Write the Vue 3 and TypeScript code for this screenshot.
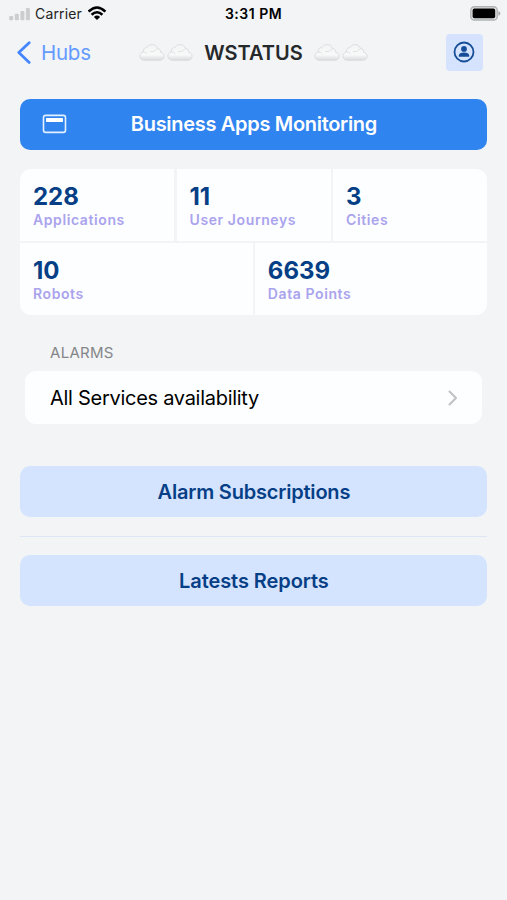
<script setup lang="ts">
interface Stat {
  value: number
  label: string
}

const totals: Stat[] = [
  { value: 228, label: 'Applications' },
  { value: 11, label: 'User Journeys' },
  { value: 3, label: 'Cities' },
]

const resources: Stat[] = [
  { value: 10, label: 'Robots' },
  { value: 6639, label: 'Data Points' },
]

const statRows: Stat[][] = [totals, resources]
const cloudGroups: string[] = ['before', 'after']
</script>

<template>
  <div class="screen">
    <svg class="defs" width="0" height="0" aria-hidden="true">
      <defs>
        <linearGradient id="cloudFill" x1="0" y1="0" x2="0" y2="1">
          <stop offset="0" stop-color="#f3f4f4" />
          <stop offset="0.65" stop-color="#f9f9fa" />
          <stop offset="1" stop-color="#d9dbde" />
        </linearGradient>
      </defs>
    </svg>

    <div class="status">
      <div class="carrier">
        <svg width="22" height="14" viewBox="0 0 22 14" fill="#cbcdce">
          <rect x="0.2" y="9" width="4" height="4.2" rx="1" />
          <rect x="5.8" y="6.8" width="4" height="6.4" rx="1" />
          <rect x="11.4" y="4" width="4" height="9.2" rx="1" />
          <rect x="16.9" y="1" width="4" height="12.2" rx="1" />
        </svg>
        <span class="carrier-name">Carrier</span>
        <svg width="20" height="15" viewBox="0 0 20 15" fill="none" stroke="#000" stroke-width="2.6">
          <path d="M0.6 5.6Q9-2.6 17.4 5.6" />
          <path d="M3.6 8.8Q9 3.7 14.4 8.8" />
          <path d="M9 14L5.9 10.9Q9 8.2 12.1 10.9Z" fill="#000" stroke="none" />
        </svg>
      </div>
      <span class="time">3:31 PM</span>
      <svg class="battery" width="31" height="15" viewBox="0 0 31 15">
        <rect x="0.8" y="0.8" width="26.4" height="13.2" rx="3.6" fill="#e2e4e6" stroke="#b0b2b4" stroke-width="1.4" />
        <rect x="2.6" y="2.6" width="22.6" height="9.6" rx="1.8" fill="#000" />
        <path d="M28.4 5Q30.4 5.7 30.4 7.4T28.4 9.8Z" fill="#a9abad" />
      </svg>
    </div>

    <nav class="nav">
      <a class="back">
        <svg width="15" height="24" viewBox="0 0 15 24" fill="none" stroke="#4586ff" stroke-width="2.8" stroke-linecap="round" stroke-linejoin="round">
          <path d="M13.2 1.8L2.8 11.6L13.2 21.4" />
        </svg>
        <span class="back-label">Hubs</span>
      </a>
      <h1 class="title">
        <template v-for="(group, i) in cloudGroups" :key="group">
          <span class="clouds">
            <svg v-for="n in 2" :key="n" width="26" height="18" viewBox="0 0 26 18">
              <path
                d="M6 16.3C2.6 16.3 .9 14.6 .9 12.1C.9 9.8 2.4 8.4 4.3 8C4 5.1 5.7 3.4 7.9 3.6C9 1.4 11 .5 13.4 .6C16.1 .7 17.9 2.2 18.5 4.6C20.8 4.6 22 6.4 21.6 8.3C23.9 8.8 25.1 10.3 25.1 12.3C25.1 14.8 23.3 16.3 20.2 16.3Z"
                fill="url(#cloudFill)" stroke="#d6d8da" stroke-width=".8" />
              <path d="M4.3 8Q7 7.7 8.3 9.7M11 7.7Q14.8 8.5 18.5 4.6" fill="none" stroke="#dddfe1" stroke-width=".9" />
            </svg>
          </span>
          <span v-if="i === 0" class="title-text">WSTATUS</span>
        </template>
      </h1>
      <button class="profile" aria-label="Profile">
        <svg width="22" height="22" viewBox="0 0 22 22">
          <circle cx="11" cy="11" r="9.5" fill="none" stroke="#164d98" stroke-width="1.8" />
          <circle cx="11" cy="7.9" r="2.9" fill="#164d98" />
          <path d="M5.8 15.8V14.5C5.8 12.6 8 11.4 11 11.4S16.2 12.6 16.2 14.5V15.8Z" fill="#164d98" />
        </svg>
      </button>
    </nav>

    <main class="content">
      <button class="action primary">
        <svg class="window" width="25" height="20" viewBox="0 0 25 20">
          <rect x="1.5" y="1.4" width="22" height="17" rx="2.2" fill="none" stroke="#e3f1ff" stroke-width="1.6" />
          <rect x="4" y="3.9" width="17" height="4" rx=".6" fill="#fff" />
        </svg>
        <span class="primary-label">Business Apps Monitoring</span>
      </button>

      <section class="stats">
        <div v-for="(row, r) in statRows" :key="r" class="stat-row">
          <div v-for="stat in row" :key="stat.label" class="stat">
            <span class="value">{{ stat.value }}</span>
            <span class="label">{{ stat.label }}</span>
          </div>
        </div>
      </section>

      <section class="alarms">
        <h2 class="heading">ALARMS</h2>
        <a class="list-item">
          <span class="item-text">All Services availability</span>
          <svg width="10" height="16" viewBox="0 0 10 16" fill="none" stroke="#c2c2c4" stroke-width="2.1" stroke-linecap="round" stroke-linejoin="round">
            <path d="M1.5 1.5L8 8L1.5 14.5" />
          </svg>
        </a>
      </section>

      <button class="action secondary"><span class="sub-label">Alarm Subscriptions</span></button>
      <hr class="divider" />
      <button class="action secondary"><span class="rep-label">Latests Reports</span></button>
    </main>
  </div>
</template>

<style>
body {
  background: #f2f4f6;
}
</style>

<style scoped>
.screen {
  box-sizing: border-box;
  width: 507px;
  height: 900px;
  overflow: hidden;
  background: #f2f4f6;
  font-family: Inter, "Liberation Sans", sans-serif;
  color: #000;
}

.defs {
  display: block;
}

svg {
  display: block;
  flex: none;
}

button {
  font: inherit;
  border: 0;
  padding: 0;
}

span,
h2 {
  white-space: nowrap;
}

.status {
  display: grid;
  grid-template-columns: 1fr auto 1fr;
  align-items: center;
  height: 27px;
  padding: 0 6px 0 9px;
}

.carrier {
  display: flex;
  align-items: center;
}

.carrier-name {
  width: 47px;
  margin: 0 6px 0 4px;
  font-size: 14px;
  letter-spacing: 0.15px;
  color: #222;
}

.time {
  margin-right: 3px;
  font-size: 14px;
  font-weight: 600;
  letter-spacing: 0.5px;
}

.battery {
  justify-self: end;
}

.nav {
  display: grid;
  grid-template-columns: 110px 1fr 110px;
  align-items: center;
  height: 51px;
}

.back {
  display: flex;
  align-items: center;
  gap: 10px;
  padding-left: 16px;
  font-size: 20.5px;
  letter-spacing: -0.25px;
  color: #659aff;
}

.title {
  display: flex;
  align-items: center;
  justify-content: center;
  gap: 11px;
  margin: 0;
  font-size: 20px;
  font-weight: 600;
  color: #26292b;
}

.clouds {
  display: flex;
  gap: 2px;
}

.profile {
  display: flex;
  align-items: center;
  justify-content: center;
  justify-self: end;
  width: 37px;
  height: 37px;
  margin: 0 24.5px 1px 0;
  border-radius: 4px;
  background: #d5e3ff;
}

.content {
  display: flex;
  flex-direction: column;
  padding: 20.6px 19.6px 0 20.4px;
}

.action {
  display: flex;
  align-items: center;
  justify-content: center;
  height: 51px;
  border-radius: 10px;
  font-size: 20px;
  font-weight: 600;
}

.primary {
  display: grid;
  grid-template-columns: 67px 1fr 67px;
  background: #3084ef;
  color: #fff;
  letter-spacing: -0.31px;
}

.window {
  margin-left: 22px;
}

.secondary {
  padding-top: 1.4px;
  background: #d4e4fe;
  color: #073f87;
}

.sub-label {
  letter-spacing: -0.2px;
}

.rep-label {
  letter-spacing: -0.07px;
}

.stats {
  display: flex;
  flex-direction: column;
  gap: 2.6px;
  margin-top: 19.6px;
  border-radius: 11px;
  overflow: hidden;
}

.stat-row {
  display: flex;
  gap: 2.6px;
}

.stat {
  display: flex;
  flex: 1 1 0;
  flex-direction: column;
  box-sizing: border-box;
  height: 71.4px;
  padding: 12.8px 0 0 12.6px;
  background: #fdfeff;
}

.value {
  font-size: 24px;
  font-weight: 700;
  line-height: 30px;
  color: #063f85;
}

.label {
  font-size: 14px;
  font-weight: 600;
  line-height: 17px;
  margin-top: -1px;
  letter-spacing: 0.6px;
  color: #aaa3ed;
}

.alarms {
  padding: 28px 5px 0 4.6px;
}

.heading {
  margin: 0 0 8px 25px;
  font-size: 15px;
  font-weight: 400;
  line-height: 20px;
  letter-spacing: 0.3px;
  color: #858688;
}

.list-item {
  display: flex;
  align-items: center;
  justify-content: space-between;
  box-sizing: border-box;
  height: 53.4px;
  padding: 1.4px 24.5px 0 25px;
  border-radius: 11px;
  background: #fdfeff;
  font-size: 20px;
}

.item-text {
  letter-spacing: -0.28px;
}

.alarms + .secondary {
  margin-top: 41.8px;
}

.divider {
  width: 100%;
  height: 1px;
  margin: 19px 0 18px;
  border: 0;
  background: #dce6f4;
}
</style>
